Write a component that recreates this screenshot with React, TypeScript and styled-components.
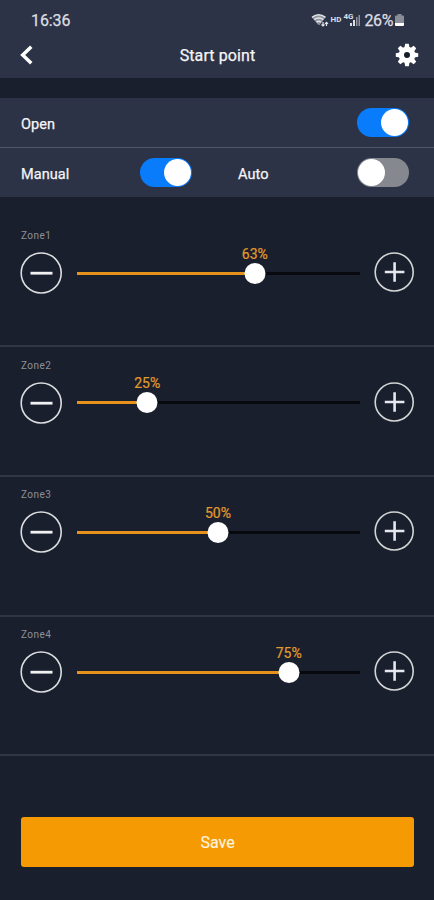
import React, { useState } from "react";
import styled, { createGlobalStyle } from "styled-components";

const GlobalStyle = createGlobalStyle`
  * { box-sizing: border-box; }
  body { margin: 0; background: #1a1f2d; }
  button { padding: 0; border: 0; background: none; color: inherit; font: inherit; cursor: pointer; }
  svg { display: block; }
`;

const Screen = styled.main`
  width: 434px;
  height: 900px;
  overflow: hidden;
  background: #1a1f2d;
  color: #f4f5f7;
  font-family: Roboto, "Liberation Sans", sans-serif;
`;

const Header = styled.header`
  height: 78px;
  background: #2d3346;
`;

const StatusBar = styled.div`
  height: 36px;
  padding: 4px 30px 0 31px;
  display: flex;
  align-items: center;
  justify-content: space-between;
  color: #dcdee3;
  font-size: 16px;
`;

const Clock = styled.span`
  letter-spacing: -0.1px;
  -webkit-text-stroke: 0.25px currentColor;
`;

const StatusIcons = styled.div`
  display: flex;
  align-items: center;
`;

const BatteryText = styled.span`
  margin-left: 4px;
  margin-right: 2px;
  font-size: 16px;
  letter-spacing: -0.4px;
  -webkit-text-stroke: 0.25px currentColor;
`;

const NavBar = styled.div`
  height: 38px;
  padding: 0 15px 0 19px;
  display: grid;
  grid-template-columns: 24px 1fr 24px;
  align-items: center;
`;

const Title = styled.h1`
  margin: 1px 0 0 -3px;
  text-align: center;
  font-size: 16px;
  font-weight: 400;
  letter-spacing: 0.1px;
  -webkit-text-stroke: 0.25px currentColor;
`;

const Settings = styled.section`
  margin-top: 20px;
  height: 99px;
  background: #2d3346;
`;

const SettingRow = styled.div<{ $divided?: boolean }>`
  height: ${(p) => (p.$divided ? 50 : 49)}px;
  padding: 0 24px 0 21px;
  display: flex;
  align-items: center;
  border-bottom: ${(p) => (p.$divided ? "1.5px solid #50566a" : "0")};
`;

const SettingLabel = styled.span<{ $width: number }>`
  width: ${(p) => p.$width}px;
  padding-top: 3px;
  font-size: 14.5px;
  letter-spacing: 0.05px;
  -webkit-text-stroke: 0.25px currentColor;
`;

const Toggle = styled.button<{ $on: boolean }>`
  width: 52px;
  height: 29px;
  padding: 1px;
  border-radius: 15px;
  display: flex;
  align-items: center;
  justify-content: ${(p) => (p.$on ? "flex-end" : "flex-start")};
  background: ${(p) => (p.$on ? "#087cfb" : "#85888f")};
`;

const ToggleKnob = styled.span`
  width: 27px;
  height: 27px;
  border-radius: 50%;
  background: #fff;
`;

const Gap = styled.span<{ $size: number }>`
  flex: 0 0 ${(p) => p.$size}px;
`;

const Zone = styled.section<{ $height: number; $top: number }>`
  height: ${(p) => p.$height}px;
  padding: ${(p) => p.$top}px 20px 0;
  border-bottom: 2px solid #303643;
`;

const ZoneLabel = styled.div`
  height: 14px;
  padding-left: 1px;
  color: #8d9098;
  font-size: 10px;
  line-height: 14px;
  letter-spacing: 0.45px;
`;

const ZoneControls = styled.div`
  margin-top: 9px;
  height: 42px;
  display: flex;
  align-items: center;
  justify-content: space-between;
`;

const Stepper = styled.button<{ $small?: boolean }>`
  width: ${(p) => (p.$small ? 40 : 42)}px;
  height: ${(p) => (p.$small ? 40 : 42)}px;
  margin-top: ${(p) => (p.$small ? -2 : 0)}px;
`;

const Track = styled.div`
  position: relative;
  width: 283px;
  height: 3px;
  background: #07090e;
`;

const Fill = styled.div`
  height: 3px;
  background: #e6921b;
`;

const Thumb = styled.div`
  position: absolute;
  top: -9px;
  width: 21px;
  height: 21px;
  border-radius: 50%;
  background: #fff;
  transform: translateX(-50%);
`;

const Percent = styled.span`
  position: absolute;
  bottom: 13px;
  color: #e29a2c;
  font-size: 14px;
  line-height: 16px;
  transform: translateX(-50%);
  -webkit-text-stroke: 0.2px currentColor;
`;

const Footer = styled.footer`
  padding: 61px 20px 0 21px;
`;

const SaveButton = styled.button`
  width: 393px;
  height: 50px;
  border-radius: 3px;
  background: #f59a03;
  color: #fff3dc;
  font-size: 16px;
  padding-top: 1px;
  -webkit-text-stroke: 0.2px currentColor;
`;

const WifiIcon = () => (
  <svg width="18" height="15" viewBox="0 0 18 15" fill="none">
    <path d="M1 4.5Q7.5-1 14.5 4.5L9 11.5Q8 12.5 7 11.5Z" fill="#8f949e" />
    <path d="M1 4.3Q7.7-.8 14.5 4.3M3.2 6.7Q7.8 3.4 12.2 6.7M5.5 9.2Q8 7.3 10 9.2" stroke="#e2e4e8" strokeWidth="1.5" />
    <path d="M12 9v4m-1.5-1.5L12 13l1.5-1.5M15.5 13V9.3M14 10.8l1.5-1.5 1.5 1.5" stroke="#e2e4e8" strokeWidth="1.2" />
  </svg>
);

const SmallMark = styled.span<{ $size: number; $raise?: number }>`
  margin-left: 2px;
  margin-right: ${(p) => (p.$raise ? -3 : 0)}px;
  margin-bottom: ${(p) => p.$raise || 0}px;
  font-size: ${(p) => p.$size}px;
  font-weight: 700;
  line-height: 10px;
`;

const SignalIcon = () => (
  <svg width="10" height="15" viewBox="0 0 10 15">
    <path d="M0 10h2v3H0zM3 7h2v6H3z" fill="#dcdee3" />
    <path d="M6 4h1.5v9H6zM8.5 2H10v11H8.5z" fill="#8f949e" />
  </svg>
);

const BatteryIcon = () => (
  <svg width="9" height="14" viewBox="0 0 9 14">
    <path d="M2.5 1h4v1.5H8a1 1 0 0 1 1 1V10H0V3.5a1 1 0 0 1 1-1h1.5z" fill="#898d97" />
    <path d="M0 10h9v2a1 1 0 0 1-1 1H1a1 1 0 0 1-1-1z" fill="#fff" />
  </svg>
);

const BackIcon = () => (
  <svg width="16" height="22" viewBox="0 0 16 22" fill="none">
    <path d="M12.3 2.7 3.7 11l8.6 8.3" stroke="#fff" strokeWidth="3.5" />
  </svg>
);

const GearIcon = () => (
  <svg width="24" height="24" viewBox="-12 -12 24 24">
    <g fill="#fff">
      {[0, 45, 90, 135].map((angle) => (
        <path key={angle} d="M-2.5-7.5-1.8-11.2H1.8L2.5-7.5V7.5L1.8 11.2H-1.8L-2.5 7.5Z" transform={`rotate(${angle})`} />
      ))}
      <circle r="8.3" />
    </g>
    <circle r="3" fill="#171d2c" />
  </svg>
);

const MinusIcon = () => (
  <svg width="42" height="42" viewBox="0 0 42 42" fill="none">
    <circle cx="21.2" cy="21" r="20" stroke="#dcdddf" strokeWidth="1.6" />
    <path d="M10.5 21.2h22" stroke="#f1f1f2" strokeWidth="2.8" />
  </svg>
);

const PlusIcon = () => (
  <svg width="40" height="40" viewBox="0 0 40 40" fill="none">
    <circle cx="20.2" cy="20" r="19" stroke="#d3d5d5" strokeWidth="1.6" />
    <path d="M10.8 20h19.6M20.6 10.2v19.6" stroke="#e5e8ee" strokeWidth="2.6" />
  </svg>
);

interface ZoneData {
  name: string;
  value: number;
  height: number;
  top: number;
}

const initialZones: ZoneData[] = [
  { name: "Zone1", value: 63, height: 150, top: 32 },
  { name: "Zone2", value: 25, height: 129.5, top: 11.5 },
  { name: "Zone3", value: 50, height: 140, top: 11.5 },
  { name: "Zone4", value: 75, height: 139.5, top: 11.5 },
];

function ToggleSwitch({ label, initial }: { label: string; initial: boolean }) {
  const [on, setOn] = useState(initial);
  return (
    <Toggle $on={on} role="switch" aria-checked={on} aria-label={label} onClick={() => setOn(!on)}>
      <ToggleKnob />
    </Toggle>
  );
}

function ZoneSlider({ zone }: { zone: ZoneData }) {
  const [value, setValue] = useState(zone.value);
  return (
    <Zone $height={zone.height} $top={zone.top}>
      <ZoneLabel>{zone.name}</ZoneLabel>
      <ZoneControls>
        <Stepper aria-label="Decrease" onClick={() => setValue(Math.max(0, value - 1))}><MinusIcon /></Stepper>
        <Track>
          <Fill style={{ width: `${value}%` }} />
          <Percent style={{ left: `${value}%` }}>{value}%</Percent>
          <Thumb style={{ left: `${value}%` }} />
        </Track>
        <Stepper $small aria-label="Increase" onClick={() => setValue(Math.min(100, value + 1))}><PlusIcon /></Stepper>
      </ZoneControls>
    </Zone>
  );
}

export default function App() {
  return (
    <>
      <GlobalStyle />
      <Screen>
        <Header>
          <StatusBar>
            <Clock>16:36</Clock>
            <StatusIcons>
              <WifiIcon />
              <SmallMark $size={8}>HD</SmallMark>
              <SmallMark $size={8} $raise={6}>4G</SmallMark>
              <SignalIcon />
              <BatteryText>26%</BatteryText>
              <BatteryIcon />
            </StatusIcons>
          </StatusBar>
          <NavBar>
            <button aria-label="Back"><BackIcon /></button>
            <Title>Start point</Title>
            <button aria-label="Settings"><GearIcon /></button>
          </NavBar>
        </Header>
        <Settings>
          <SettingRow $divided>
            <SettingLabel $width={336}>Open</SettingLabel>
            <ToggleSwitch label="Open" initial />
          </SettingRow>
          <SettingRow>
            <SettingLabel $width={119}>Manual</SettingLabel>
            <ToggleSwitch label="Manual" initial />
            <Gap $size={46} />
            <SettingLabel $width={119}>Auto</SettingLabel>
            <ToggleSwitch label="Auto" initial={false} />
          </SettingRow>
        </Settings>
        {initialZones.map((zone) => <ZoneSlider key={zone.name} zone={zone} />)}
        <Footer><SaveButton>Save</SaveButton></Footer>
      </Screen>
    </>
  );
}
